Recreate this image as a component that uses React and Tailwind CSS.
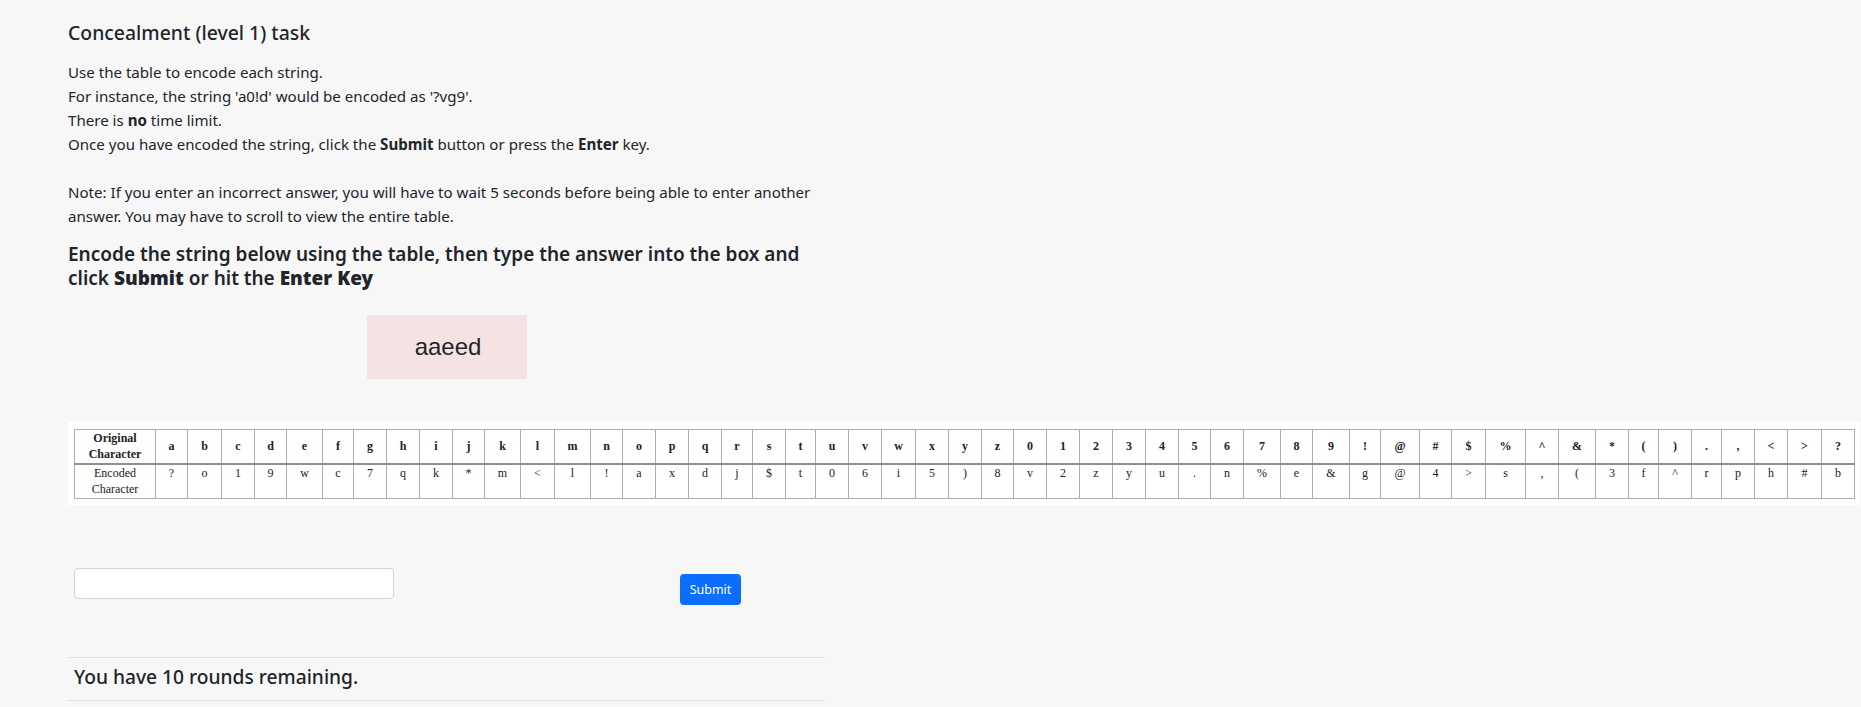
const ORIGINAL = 'abcdefghijklmnopqrstuvwxyz0123456789!@#$%^&*().,<>?'.split('');
const ENCODED = '?o19wc7qk*m<l!axdj$t06i5)8v2zyu.n%e&g@4>s,(3f^rph#b'.split('');

// column edges measured off the reference table
const EDGES = [74, 155, 187, 221, 254, 286, 322, 353, 386, 419, 452, 484, 520, 554, 590, 622, 655, 688, 721, 752, 785, 815, 848, 881, 915, 948, 981, 1013, 1046, 1079, 1112, 1145, 1178, 1210, 1243, 1280, 1312, 1349, 1380, 1419, 1451, 1485, 1525, 1558, 1595, 1628, 1658, 1691, 1721, 1754, 1787, 1821, 1854];
const WIDTHS = EDGES.slice(1).map((edge, i) => edge - EDGES[i]);

const cellBorder = 'border border-[#adadad] p-0 text-center';

export default function App() {
  return (
    <div className="min-h-[707px] overflow-hidden bg-[#f7f7f8] text-[16px] leading-[24px] text-[#212529] [font-family:'Noto_Sans',sans-serif]">
      <div className="ml-[68px] w-[757px] pt-[21px]">
        <h5 className="text-[19.4px] leading-[24px] font-medium">Concealment (level 1) task</h5>

        <p className="mt-[15px] text-[15.1px]">
          Use the table to encode each string.<br />
          For instance, the string 'a0!d' would be encoded as '?vg9'.<br />
          There is <b>no</b> time limit.<br />
          Once you have encoded the string, click the <b>Submit</b> button or press the <b>Enter</b> key.<br />
          <br />
          Note: If you enter an incorrect answer, you will have to wait 5 seconds before being able to enter another answer. You may have to scroll to view the entire table.
        </p>

        <h5 className="mt-[14px] text-[19px] leading-[24px] font-semibold">
          Encode the string below using the table, then type the answer into the box and click <b>Submit</b> or hit the <b>Enter Key</b>
        </h5>

        <div className="mt-[25px] ml-[299px] flex h-[64px] w-[160px] items-center justify-center bg-[#f5e3e4] pl-[2px] text-[24px] [font-family:'Liberation_Sans',sans-serif]">
          aaeed
        </div>
      </div>

      <div className="mt-[43px] ml-[68px] h-[83px] w-[1792px] bg-white pt-[7px] pl-[6px]">
        <table className="table-fixed border-collapse font-['Liberation_Serif',serif] text-[12px] leading-[16px] text-[#222]">
          <colgroup>
            {WIDTHS.map((width, i) => (
              <col key={i} style={{ width }} />
            ))}
          </colgroup>
          <tbody>
            <tr className="h-[34px] border-b-2 border-[#8f8f8f] font-bold">
              <td className={cellBorder}>Original<br />Character</td>
              {ORIGINAL.map((ch, i) => (
                <td key={i} className={cellBorder}>{ch}</td>
              ))}
            </tr>
            <tr className="h-[35px]">
              <td className={cellBorder}>Encoded<br />Character</td>
              {ENCODED.map((ch, i) => (
                <td key={i} className={`${cellBorder} align-top`}>{ch}</td>
              ))}
            </tr>
          </tbody>
        </table>
      </div>

      <div className="ml-[68px] w-[757px]">
        <div className="mt-[63px] flex items-start">
          <input type="text" className="ml-[6px] h-[31px] w-[320px] rounded-[4px] border border-[#ced4da] bg-white" />
          <button className="mt-[6px] ml-[286px] h-[31px] w-[61px] rounded-[4px] bg-[#0d6efd] text-[12.5px] text-white">Submit</button>
        </div>

        <div className="mt-[52px] border-y border-[#dee2e6] pt-[6px] pb-[10px] pl-[6px] text-[19.2px] leading-[26px] font-medium">
          You have 10 rounds remaining.
        </div>
      </div>
    </div>
  );
}
